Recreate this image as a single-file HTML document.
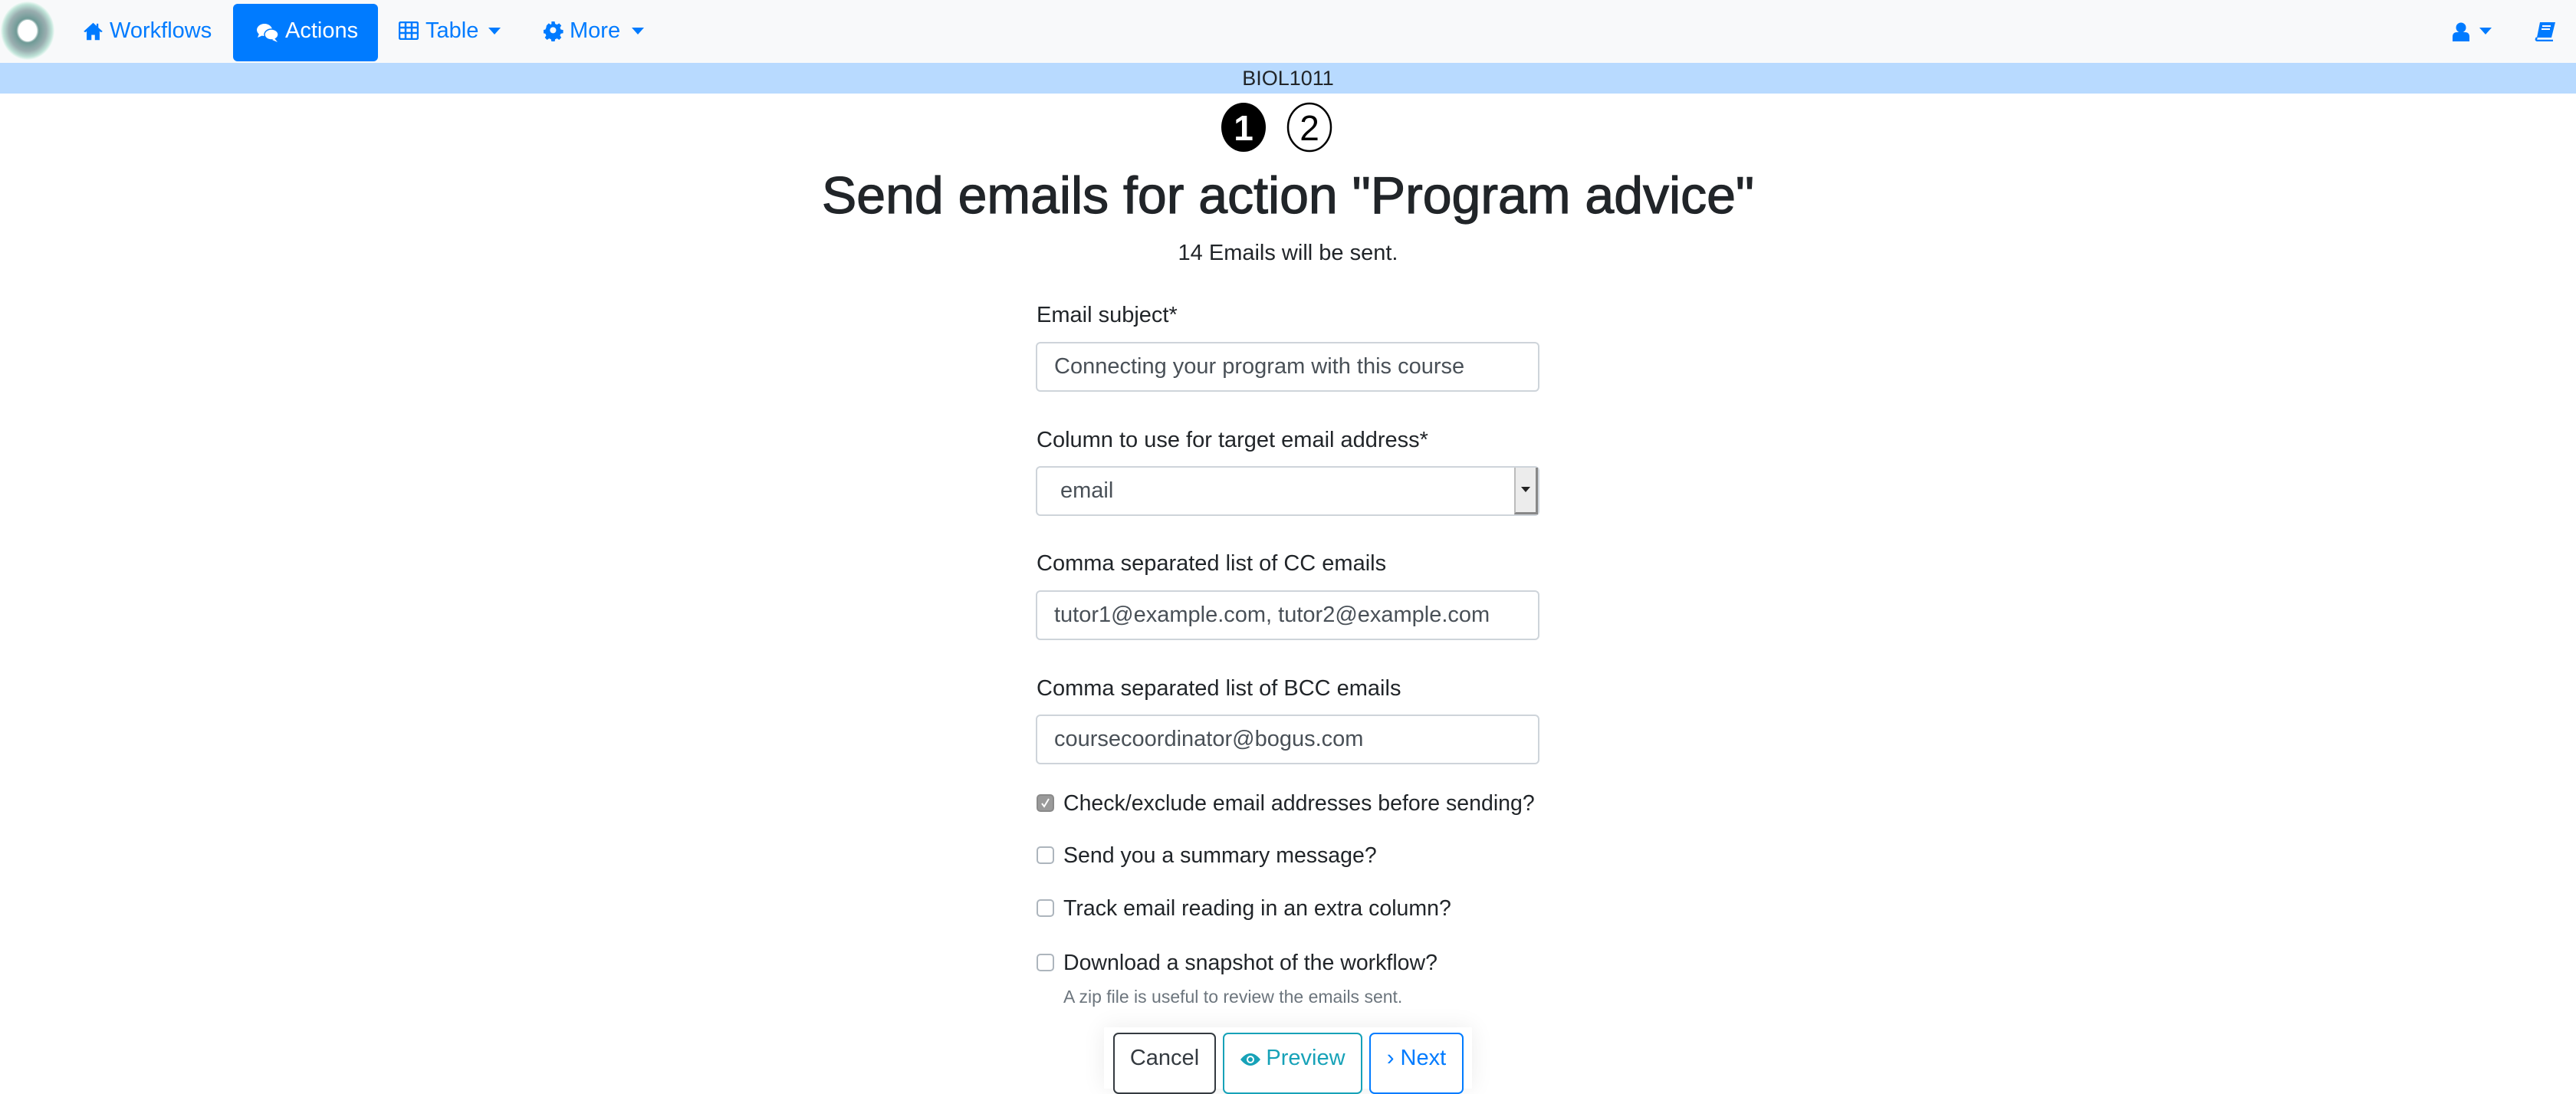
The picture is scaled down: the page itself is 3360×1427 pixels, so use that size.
<!DOCTYPE html>
<html><head><meta charset="utf-8"><style>
*{box-sizing:border-box;margin:0;padding:0}
body{width:3360px;height:1413px;overflow:hidden;background:#fff;font-family:"Liberation Sans",Arial,sans-serif;color:#212529;position:relative}
.a{position:absolute;white-space:nowrap}
.nav{left:0;top:0;width:3360px;height:82px;background:#f8f9fa}
.band{left:0;top:82px;width:3360px;height:40px;background:#b8daff;text-align:center;font-size:27px;line-height:40px;color:#212529}
.nl{font-size:29px;color:#007bff;line-height:40px;top:20px}
.lbl{left:1352px;font-size:29px;line-height:36px}
.inp{left:1351px;width:657px;height:65px;border:2px solid #ced4da;border-radius:6px;font-size:29px;color:#495057;line-height:61px;padding-left:22px;background:#fff}
.cb{left:1352px;width:23px;height:23px;border:2px solid #adb5bd;border-radius:5px;background:#fff}
.ct{left:1387px;font-size:28.5px;line-height:36px}
.btn{top:1347px;height:80px;border:2px solid;border-radius:7px;font-size:29px;line-height:62px;text-align:center;background:#fff}
</style></head><body>
<div class="a nav"></div>
<svg class="a" style="left:0;top:2px" width="80" height="80" viewBox="0 0 80 80">
<defs><radialGradient id="g" cx="50%" cy="50%" r="50%"><stop offset="0.33" stop-color="#fff"/><stop offset="0.42" stop-color="#6f9a96"/><stop offset="0.7" stop-color="#9aaeb0"/><stop offset="0.9" stop-color="#bfe3d8"/><stop offset="1" stop-color="#f2faf7"/></radialGradient></defs>
<ellipse cx="36" cy="38" rx="35" ry="38" fill="url(#g)"/><ellipse cx="36" cy="38" rx="12" ry="14" fill="#fff"/></svg>
<div class="a" style="left:304px;top:5px;width:189px;height:75px;background:#007bff;border-radius:6px"></div>
<svg class="a" style="left:108px;top:28px" width="27" height="26" viewBox="0 0 24 22"><path d="M12 1 L1 11 L3 12 L4.5 10.7 V21 H10 V15 H14 V21 H19.5 V10.7 L21 12 L23 11 L18 6.5 V2 H16 V4.7 Z" fill="#007bff"/></svg>
<div class="a nl" style="left:143px">Workflows</div>
<svg class="a" style="left:334px;top:29px" width="30" height="28" viewBox="0 0 30 28"><ellipse cx="11" cy="10" rx="10" ry="8" fill="#fff"/><path d="M4 15 L2 20 L9 17Z" fill="#fff"/><ellipse cx="20" cy="16" rx="9" ry="7" fill="#fff" stroke="#007bff" stroke-width="1.5"/><path d="M24 21 L28 26 L21 23Z" fill="#fff"/></svg>
<div class="a nl" style="left:372px;color:#fff">Actions</div>
<svg class="a" style="left:520px;top:28px" width="26" height="24" viewBox="0 0 26 24"><rect x="1" y="1" width="24" height="22" rx="2" fill="none" stroke="#007bff" stroke-width="2.5"/><path d="M1 8H25M1 15H25M9 1V23M17 1V23" stroke="#007bff" stroke-width="2.5"/></svg>
<div class="a nl" style="left:555px">Table</div>
<svg class="a" style="left:637px;top:36px" width="16" height="10" viewBox="0 0 16 10"><path d="M0 0H16L8 9Z" fill="#007bff"/></svg>
<svg class="a" style="left:709px;top:27px" width="27" height="27" viewBox="0 0 24 24"><path d="M10 1h4l.6 3 2.4 1 2.6-1.7 2.8 2.8L20.7 8.7l1 2.4 3 .6v4l-3 .6-1 2.4 1.7 2.6-2.8 2.8-2.6-1.7-2.4 1-.6 3h-4l-.6-3-2.4-1-2.6 1.7-2.8-2.8 1.7-2.6-1-2.4-3-.6v-4l3-.6 1-2.4L3.7 6.1l2.8-2.8L9 5l1-1z" fill="#007bff" transform="scale(.92)"/><circle cx="11" cy="11" r="3.6" fill="#f8f9fa"/></svg>
<div class="a nl" style="left:743px">More</div>
<svg class="a" style="left:824px;top:36px" width="16" height="10" viewBox="0 0 16 10"><path d="M0 0H16L8 9Z" fill="#007bff"/></svg>
<svg class="a" style="left:3199px;top:29px" width="22" height="25" viewBox="0 0 22 25"><circle cx="11" cy="7" r="6.5" fill="#007bff"/><path d="M0 25V19Q0 13 6 13H16Q22 13 22 19V25Z" fill="#007bff"/></svg>
<svg class="a" style="left:3234px;top:36px" width="16" height="10" viewBox="0 0 16 10"><path d="M0 0H16L8 9Z" fill="#007bff"/></svg>
<svg class="a" style="left:3306px;top:28px" width="28" height="26" viewBox="0 0 28 26"><path d="M7 1H27L22 21H3Z" fill="#007bff"/><path d="M3 21Q0 25 5 25H24" fill="none" stroke="#007bff" stroke-width="2.5"/><path d="M10 6H21M9 10H20" stroke="#fff" stroke-width="2"/></svg>
<div class="a band">BIOL1011</div>
<svg class="a" style="left:1590px;top:132px" width="150" height="68" viewBox="0 0 150 68">
<ellipse cx="32" cy="34" rx="29" ry="32" fill="#000"/>
<text x="32" y="51" text-anchor="middle" font-family="Liberation Sans,Arial,sans-serif" font-size="46" font-weight="bold" fill="#fff">1</text>
<ellipse cx="118" cy="34" rx="28" ry="31" fill="none" stroke="#000" stroke-width="2.5"/>
<text x="118" y="51" text-anchor="middle" font-family="Liberation Sans,Arial,sans-serif" font-size="46" fill="#000">2</text>
</svg>
<div class="a" style="left:0;width:3360px;top:212px;text-align:center;font-size:68px;line-height:86px;-webkit-text-stroke:1.2px #212529">Send emails for action "Program advice"</div>
<div class="a" style="left:0;width:3360px;top:312px;text-align:center;font-size:29px;line-height:36px">14 Emails will be sent.</div>
<div class="a lbl" style="top:393px">Email subject*</div>
<div class="a inp" style="top:446px">Connecting your program with this course</div>
<div class="a lbl" style="top:556px">Column to use for target email address*</div>
<div class="a inp" style="top:608px;padding-left:30px">email</div>
<div class="a" style="left:1975px;top:610px;width:31px;height:61px;background:#ececec;border-left:2px solid #bbb;border-right:3px solid #888;border-bottom:3px solid #888"></div>
<svg class="a" style="left:1984px;top:635px" width="12" height="8" viewBox="0 0 12 8"><path d="M0 0H12L6 7Z" fill="#222"/></svg>
<div class="a lbl" style="top:717px">Comma separated list of CC emails</div>
<div class="a inp" style="top:770px">tutor1@example.com, tutor2@example.com</div>
<div class="a lbl" style="top:880px">Comma separated list of BCC emails</div>
<div class="a inp" style="top:932px">coursecoordinator@bogus.com</div>
<div class="a cb" style="top:1036px;background:#9a9a9a;border-color:#8a8a8a"></div>
<svg class="a" style="left:1356px;top:1040px" width="15" height="15" viewBox="0 0 15 15"><path d="M3 8L6 12L12 2" fill="none" stroke="#fff" stroke-width="2"/></svg>
<div class="a ct" style="top:1030px">Check/exclude email addresses before sending?</div>
<div class="a cb" style="top:1104px"></div>
<div class="a ct" style="top:1098px">Send you a summary message?</div>
<div class="a cb" style="top:1173px"></div>
<div class="a ct" style="top:1167px">Track email reading in an extra column?</div>
<div class="a cb" style="top:1244px"></div>
<div class="a ct" style="top:1238px">Download a snapshot of the workflow?</div>
<div class="a" style="left:1387px;top:1286px;font-size:23px;line-height:28px;color:#6c757d">A zip file is useful to review the emails sent.</div>
<div class="a" style="left:1440px;top:1340px;width:480px;height:80px;box-shadow:0 0 30px rgba(0,0,0,.08)"></div>
<div class="a btn" style="left:1452px;width:134px;border-color:#343a40;color:#343a40">Cancel</div>
<div class="a btn" style="left:1595px;width:182px;border-color:#17a2b8;color:#17a2b8"><svg style="vertical-align:-3px;margin-right:6px" width="28" height="20" viewBox="0 0 28 20"><path d="M1 10Q14 -6 27 10Q14 26 1 10Z" fill="#17a2b8"/><circle cx="14" cy="10" r="5" fill="#fff"/><circle cx="14" cy="10" r="3" fill="#17a2b8"/></svg>Preview</div>
<div class="a btn" style="left:1786px;width:123px;border-color:#007bff;color:#007bff">› Next</div>
</body></html>
